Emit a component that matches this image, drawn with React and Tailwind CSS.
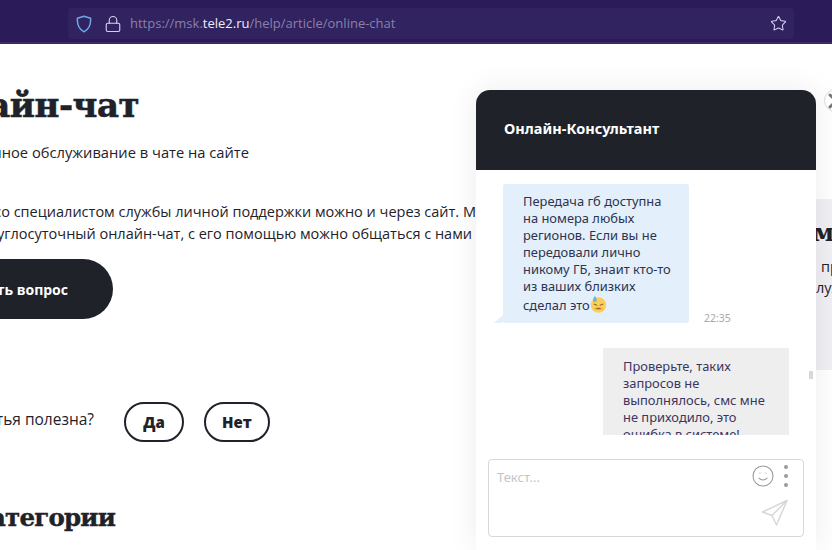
import React from 'react'
import { Lock, Star, Smile, X } from 'lucide-react'

function AddressBar() {
  return (
    <header className="h-11 bg-[#2b1b58] border-b-2 border-b-[#3a2a68] pl-[68px] pr-[38px] pt-2">
      <div className="h-[31px] bg-[#30235f] rounded flex items-center">
        <svg viewBox="0 0 16 18" className="w-[16px] h-[18px] ml-2 text-[#6fa8e8]" fill="none" stroke="currentColor" strokeWidth="1.5">
          <path d="M8 1.2 14.6 3.2C15 9.5 13 14.2 8 16.8 3 14.2 1 9.5 1.4 3.2Z" strokeLinejoin="round" />
        </svg>
        <Lock className="w-[18px] h-[18px] ml-[12px] text-[#d9cdf5]" strokeWidth={1.5} />
        <div className="ml-[8px] text-[13px] text-[#8a80ac] font-['Open_Sans',sans-serif]">
          https://msk.<span className="text-[#f0edf9]">tele2.ru</span>/help/article/online-chat
        </div>
        <Star className="w-[17px] h-[17px] ml-auto mr-[7px] text-[#d9cdf5]" strokeWidth={1.5} />
      </div>
    </header>
  )
}

function Article() {
  return (
    <main className="w-[476px] overflow-hidden text-[#1f2229] font-['Open_Sans',sans-serif]">
      <h1 className="mt-[41px] h-[40px] text-[34px] leading-[40px] font-bold font-['DejaVu_Serif',serif] [-webkit-text-stroke:0.6px_#1f2229] whitespace-nowrap flex justify-end w-[139px] tracking-[-0.5px]">
        <span>Онлайн-чат</span>
      </h1>
      <p className="mt-[17px] text-[14.7px] leading-[20px] whitespace-nowrap flex justify-end w-[249px]">
        <span>Круглосуточное обслуживание в чате на сайте</span>
      </p>
      <p className="mt-[39px] text-[14.5px] leading-[22px] whitespace-nowrap flex justify-end">
        <span>Связаться со специалистом службы личной поддержки можно и через сайт. М</span>
      </p>
      <p className="text-[14.5px] leading-[22px] whitespace-nowrap flex justify-end w-[472px]">
        <span>Для этого есть круглосуточный онлайн-чат, с его помощью можно общаться с нами</span>
      </p>
      <div className="mt-[14px] h-[60px] w-[113px] bg-[#1f2229] rounded-r-[30px] text-white font-bold text-[14px] whitespace-nowrap flex items-center justify-end pr-[45px]">
        <span>Задать вопрос</span>
      </div>
      <div className="mt-[83px] flex items-center h-10">
        <div className="w-[94px] text-[15.5px] whitespace-nowrap flex justify-end -mt-[4px]">
          <span>Эта статья полезна?</span>
        </div>
        <button className="ml-[30px] w-[60px] h-10 rounded-[20px] border-2 border-[#1f2229] font-extrabold text-[15px]">Да</button>
        <button className="ml-[20px] w-[66px] h-10 rounded-[20px] border-2 border-[#1f2229] font-extrabold text-[15px]">Нет</button>
      </div>
      <h2 className="mt-[56px] text-[24.5px] leading-[40px] font-bold font-['DejaVu_Serif',serif] [-webkit-text-stroke:0.4px_#1f2229] whitespace-nowrap flex justify-end w-[115px] tracking-[-0.8px]">
        <span>Категории</span>
      </h2>
    </main>
  )
}

function SweatEmoji() {
  return (
    <svg viewBox="0 0 16 17" className="inline-block w-[17px] h-[18px] align-[-3px]">
      <circle cx="8" cy="9.5" r="7.3" fill="#fbcf5a" />
      <path d="M3 12.5a7.3 7.3 0 0 0 10 0Z" fill="#f3a93c" />
      <path d="M3.6 8.6 6.8 9.8M12.4 8.6 9.2 9.8" stroke="#8a5a1e" strokeWidth="1" fill="none" />
      <path d="M6 12.6h4" stroke="#8a5a1e" strokeWidth="1" />
      <path d="M4.6 0.8C3.6 2.6 2.8 3.6 2.8 4.8a1.8 1.8 0 0 0 3.6 0C6.4 3.6 5.6 2.6 4.6 0.8Z" fill="#6fb4dc" />
    </svg>
  )
}

function ChatWidget() {
  return (
    <div className="absolute left-[476px] top-[90px] w-[340px] h-[460px] bg-white rounded-t-[14px] shadow-[0_0_30px_rgba(0,0,0,0.08)] flex flex-col font-['Noto_Sans',sans-serif]">
      <div className="h-[80px] shrink-0 bg-[#1f2229] rounded-t-[14px] pl-[28px] pt-[28px] text-white font-bold text-[14.5px] leading-[20px]">
        Онлайн-Консультант
      </div>
      <div className="h-[265px] shrink-0 overflow-hidden relative text-[12.9px] leading-[17px]">
        <div className="absolute right-[3px] top-[201px] w-[4px] h-[8px] bg-[#d8d8d8]" />
        <div className="flex items-end mt-[14px] ml-[27px]">
          <div className="relative w-[186px] bg-[#e3f0fb] rounded-[2px] pl-[20px] pr-[14px] pt-[9px] pb-[9px] text-[#2e3350]">
            <div className="absolute -left-[9px] bottom-0 w-0 h-0 border-b-[8px] border-b-[#e3f0fb] border-l-[9px] border-l-transparent" />
            Передача гб доступна на номера любых регионов. Если вы не передовали лично никому ГБ, знаит кто-то из ваших близких сделал это<SweatEmoji />
          </div>
          <div className="ml-[15px] mb-[-2px] text-[10.5px] leading-[14px] text-[#a8a8a8]">22:35</div>
        </div>
        <div className="ml-[127px] mt-[25px] w-[186px] h-[200px] bg-[#eeeeee] rounded-[2px] pl-[20px] pr-[14px] pt-[10px] text-[#3b3560]">
          Проверьте, таких запросов не выполнялось, смс мне не приходило, это ошибка в системе!
        </div>
      </div>
      <div className="relative mx-[12px] mt-[24px] h-[78px] border border-[#d8d8d8] rounded-[4px] bg-white">
        <div className="pl-[8px] pt-[8px] text-[13px] leading-[18px] text-[#c4c4c4]">Текст...</div>
        <Smile className="absolute left-[262px] top-[4px] w-[24px] h-[24px] text-[#9a9a9a]" strokeWidth={1.1} />
        <div className="absolute left-[295px] top-[5px] flex flex-col gap-[5px]">
          <span className="w-[4px] h-[4px] rounded-full bg-[#9a9aa2]" />
          <span className="w-[4px] h-[4px] rounded-full bg-[#9a9aa2]" />
          <span className="w-[4px] h-[4px] rounded-full bg-[#9a9aa2]" />
        </div>
        <svg viewBox="0 0 28 28" className="absolute left-[272px] top-[39px] w-[28px] h-[28px] text-[#d6d6d6]" fill="none" stroke="currentColor" strokeWidth="1.4" strokeLinejoin="round">
          <path d="M26 1.5 1.5 13 11 16.5 15.5 26Z" />
          <path d="M26 1.5 11 16.5" />
        </svg>
      </div>
    </div>
  )
}

function SidePanel() {
  return (
    <div className="absolute left-[780px] top-[199px] w-[60px] h-[171px] bg-[#f0f0f4] overflow-hidden text-[#1f2229] font-['Open_Sans',sans-serif]">
      <div className="pl-[16px] pt-[20px] text-[24px] leading-[28px] font-bold font-['DejaVu_Serif',serif] whitespace-nowrap">км</div>
      <div className="pl-[41px] mt-[10px] text-[14.5px] leading-[20px] whitespace-nowrap">пр</div>
      <div className="pl-[36px] mt-[1px] text-[14.5px] leading-[19px] whitespace-nowrap">луж</div>
    </div>
  )
}

export default function App() {
  return (
    <div className="relative w-[832px] h-[550px] bg-white overflow-hidden">
      <AddressBar />
      <Article />
      <SidePanel />
      <ChatWidget />
      <div className="absolute left-[824px] top-[89px] w-[23px] h-[23px] rounded-full bg-white border border-[#d8d8d8] flex items-center justify-center text-[#777777]">
        <X className="w-[24px] h-[24px] shrink-0" strokeWidth={3} />
      </div>
    </div>
  )
}
